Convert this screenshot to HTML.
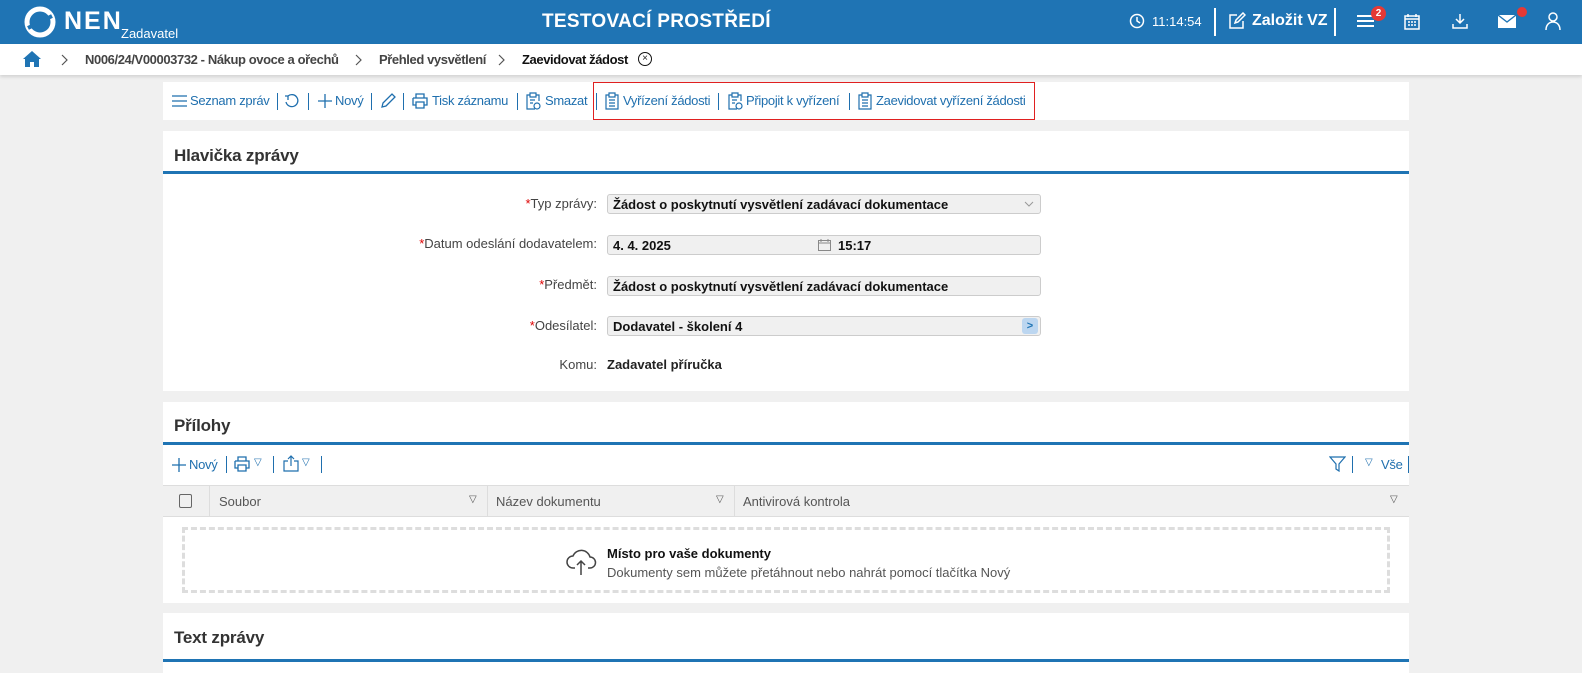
<!DOCTYPE html>
<html><head><meta charset="utf-8"><style>
*{box-sizing:border-box;margin:0;padding:0}
body{width:1582px;height:673px;overflow:hidden;background:#f0f0f0;font-family:"Liberation Sans",sans-serif;position:relative;color:#222}
.a{position:absolute;white-space:nowrap}
#hdr{left:0;top:0;width:1582px;height:44px;background:#1f74b4;color:#fff}
#bc{left:0;top:44px;width:1582px;height:31px;background:#fff;box-shadow:0 2px 3px rgba(0,0,0,.12)}
.panel{position:absolute;left:163px;width:1246px;background:#fff}
.t{position:absolute;font-size:13px;color:#1f6fae;letter-spacing:-.3px;white-space:nowrap}
.s{position:absolute;width:1px;height:17px;background:#1f6fae}
.title{font-size:17px;font-weight:bold;color:#333;letter-spacing:-.2px}
.line{position:absolute;left:0;width:1246px;height:3px;background:#1f74b4}
.lbl{font-size:13px;color:#444;text-align:right;width:300px;left:297px}
.lbl b{color:#d00;font-weight:normal}
.inp{left:607px;width:434px;height:20px;background:#f0f0f0;border:1px solid #ccc;border-radius:3px;font-size:13px;font-weight:bold;padding:2px 5px;color:#111}
svg.i{position:absolute}
</style></head><body>
<div id="hdr" class="a">
 <svg class="a" style="left:24px;top:6px" width="32" height="32" viewBox="0 0 32 32"><circle cx="16" cy="16" r="13" fill="none" stroke="#fff" stroke-width="5"/><path d="M4 22 L28 10" stroke="#1f74b4" stroke-width="4"/></svg>
 <div class="a" style="left:64px;top:7px;font-size:25px;font-weight:bold;letter-spacing:2px">NEN</div>
 <div class="a" style="left:121px;top:26px;font-size:13px">Zadavatel</div>
 <div class="a" style="left:542px;top:11px;font-size:19px;font-weight:bold;letter-spacing:.3px">TESTOVACÍ PROSTŘEDÍ</div>
 <svg class="a" style="left:1129px;top:13px" width="16" height="16" viewBox="0 0 16 16"><circle cx="8" cy="8" r="6.5" fill="none" stroke="#fff" stroke-width="1.5"/><path d="M8 4v4l3 2" fill="none" stroke="#fff" stroke-width="1.5"/></svg>
 <div class="a" style="left:1152px;top:14px;font-size:13px">11:14:54</div>
 <div class="a" style="left:1214px;top:8px;width:2px;height:28px;background:#fff"></div>
 <svg class="a" style="left:1228px;top:12px" width="18" height="18" viewBox="0 0 18 18"><path d="M9 3H2v13h13V9M7 11l1-3 7-7 2 2-7 7z" fill="none" stroke="#fff" stroke-width="1.5"/></svg>
 <div class="a" style="left:1252px;top:12px;font-size:16px;font-weight:bold">Založit VZ</div>
 <div class="a" style="left:1334px;top:8px;width:2px;height:28px;background:#fff"></div>
 <div class="a" style="left:1357px;top:15px;width:17px;height:2px;background:#fff;box-shadow:0 5px #fff,0 10px #fff"></div>
 <div class="a" style="left:1371px;top:6px;width:15px;height:15px;border-radius:50%;background:#e53935;font-size:10px;text-align:center;line-height:15px;font-weight:bold">2</div>
 <svg class="a" style="left:1404px;top:13px" width="16" height="17" viewBox="0 0 16 17"><rect x="1" y="3" width="14" height="13" fill="none" stroke="#fff" stroke-width="1.5"/><path d="M1 6h14M4 1v3M12 1v3M4 9h2M7 9h2M10 9h2M4 12h2M7 12h2M10 12h2" stroke="#fff" stroke-width="1.5"/></svg>
 <svg class="a" style="left:1451px;top:13px" width="18" height="17" viewBox="0 0 18 17"><path d="M9 1v9M5 6l4 4 4-4M2 11v4h14v-4" fill="none" stroke="#fff" stroke-width="1.5"/></svg>
 <svg class="a" style="left:1498px;top:15px" width="18" height="13" viewBox="0 0 18 13"><rect width="18" height="13" fill="#fff"/><path d="M0 0l9 7 9-7" fill="none" stroke="#1f74b4" stroke-width="1.3"/></svg>
 <div class="a" style="left:1517px;top:7px;width:10px;height:10px;border-radius:50%;background:#e53935"></div>
 <svg class="a" style="left:1545px;top:12px" width="16" height="18" viewBox="0 0 16 18"><circle cx="8" cy="5" r="4" fill="none" stroke="#fff" stroke-width="1.5"/><path d="M1 18c0-5 3-8 7-8s7 3 7 8" fill="none" stroke="#fff" stroke-width="1.5"/></svg>
</div>
<div id="bc" class="a">
 <svg class="a" style="left:23px;top:7px" width="18" height="16" viewBox="0 0 18 16"><path d="M9 0L0 8h2v8h5v-5h4v5h5V8h2z" fill="#1f74b4"/></svg>
 <svg class="a" style="left:61px;top:10px" width="8" height="12" viewBox="0 0 8 12"><path d="M1 1l5 5-5 5" fill="none" stroke="#555" stroke-width="1.2"/></svg>
 <div class="a" style="left:85px;top:8px;font-size:13px;color:#444;font-weight:bold;letter-spacing:-.4px">N006/24/V00003732 - Nákup ovoce a ořechů</div>
 <svg class="a" style="left:355px;top:10px" width="8" height="12" viewBox="0 0 8 12"><path d="M1 1l5 5-5 5" fill="none" stroke="#555" stroke-width="1.2"/></svg>
 <div class="a" style="left:379px;top:8px;font-size:13px;color:#444;font-weight:bold;letter-spacing:-.4px">Přehled vysvětlení</div>
 <svg class="a" style="left:498px;top:10px" width="8" height="12" viewBox="0 0 8 12"><path d="M1 1l5 5-5 5" fill="none" stroke="#555" stroke-width="1.2"/></svg>
 <div class="a" style="left:522px;top:8px;font-size:13px;color:#111;font-weight:bold;letter-spacing:-.4px">Zaevidovat žádost</div>
 <div class="a" style="left:638px;top:8px;width:14px;height:14px;border:1.3px solid #111;border-radius:50%;font-size:10px;text-align:center;line-height:11px">×</div>
</div>
<div class="panel" style="top:82px;height:38px">
 <svg class="i" style="left:9px;top:13px" width="15" height="12" viewBox="0 0 15 12"><path d="M0 1h15M0 6h15M0 11h15" stroke="#1f6fae" stroke-width="1.3"/></svg>
 <div class="t" style="left:27px;top:11px">Seznam zpráv</div><div class="s" style="left:114px;top:11px"></div>
 <svg class="i" style="left:121px;top:11px" width="16" height="16" viewBox="0 0 16 16"><path d="M4 3a6 6 0 1 1-2 6M4 3v4M4 3H1" fill="none" stroke="#1f6fae" stroke-width="1.3"/></svg>
 <div class="s" style="left:145px;top:11px"></div>
 <svg class="i" style="left:155px;top:12px" width="14" height="14" viewBox="0 0 14 14"><path d="M7 0v14M0 7h14" stroke="#1f6fae" stroke-width="1.3"/></svg>
 <div class="t" style="left:172px;top:11px">Nový</div><div class="s" style="left:208px;top:11px"></div>
 <svg class="i" style="left:217px;top:11px" width="16" height="16" viewBox="0 0 16 16"><path d="M2 14l1-4 9-9 3 3-9 9z" fill="none" stroke="#1f6fae" stroke-width="1.3"/></svg>
 <div class="s" style="left:240px;top:11px"></div>
 <svg class="i" style="left:249px;top:11px" width="16" height="16" viewBox="0 0 16 16"><path d="M4 5V1h8v4M1 5h14v7h-3M4 12H1V5M4 9h8v6H4z" fill="none" stroke="#1f6fae" stroke-width="1.3"/></svg>
 <div class="t" style="left:269px;top:11px">Tisk záznamu</div><div class="s" style="left:354px;top:11px"></div>
 <svg class="i" style="left:362px;top:10px" width="16" height="18" viewBox="0 0 16 18"><path d="M5 3H2v14h8M11 3h3v6M5 1h6v4H5zM5 8h5M5 11h3" fill="none" stroke="#1f6fae" stroke-width="1.2"/><circle cx="12" cy="14" r="3" fill="none" stroke="#1f6fae" stroke-width="1.2"/></svg>
 <div class="t" style="left:382px;top:11px">Smazat</div><div class="s" style="left:433px;top:11px"></div>
 <svg class="i" style="left:442px;top:10px" width="14" height="18" viewBox="0 0 14 18"><path d="M4 3H1v14h12V3h-3M4 1h6v4H4zM4 8h6M4 11h6M4 14h6" fill="none" stroke="#1f6fae" stroke-width="1.2"/></svg>
 <div class="t" style="left:460px;top:11px">Vyřízení žádosti</div><div class="s" style="left:555px;top:11px"></div>
 <svg class="i" style="left:564px;top:10px" width="16" height="18" viewBox="0 0 16 18"><path d="M5 3H2v14h8M11 3h3v6M5 1h6v4H5zM5 8h5M5 11h3" fill="none" stroke="#1f6fae" stroke-width="1.2"/><circle cx="12" cy="14" r="3" fill="none" stroke="#1f6fae" stroke-width="1.2"/></svg>
 <div class="t" style="left:583px;top:11px">Připojit k vyřízení</div><div class="s" style="left:686px;top:11px"></div>
 <svg class="i" style="left:695px;top:10px" width="14" height="18" viewBox="0 0 14 18"><path d="M4 3H1v14h12V3h-3M4 1h6v4H4zM4 8h6M4 11h6M4 14h6" fill="none" stroke="#1f6fae" stroke-width="1.2"/></svg>
 <div class="t" style="left:713px;top:11px">Zaevidovat vyřízení žádosti</div>
 <div class="a" style="left:430px;top:0;width:442px;height:38px;border:1px solid #e02020"></div>
</div>
<div class="panel" style="top:131px;height:260px">
 <div class="a title" style="left:11px;top:15px">Hlavička zprávy</div>
 <div class="line" style="top:40px"></div>
</div>
<div class="a lbl" style="top:196px"><b>*</b>Typ zprávy:</div>
<div class="a inp" style="top:194px">Žádost o poskytnutí vysvětlení zadávací dokumentace<svg style="position:absolute;right:6px;top:6px" width="10" height="6" viewBox="0 0 10 6"><path d="M1 1l4 4 4-4" fill="none" stroke="#999"/></svg></div>
<div class="a lbl" style="top:236px"><b>*</b>Datum odeslání dodavatelem:</div>
<div class="a inp" style="top:235px">4. 4. 2025<svg style="position:absolute;left:210px;top:3px" width="13" height="12" viewBox="0 0 13 12"><rect x=".5" y="1.5" width="12" height="10" fill="none" stroke="#888"/><path d="M.5 4h12M3 0v3M10 0v3" stroke="#888"/></svg><span style="position:absolute;left:230px;top:2px">15:17</span></div>
<div class="a lbl" style="top:277px"><b>*</b>Předmět:</div>
<div class="a inp" style="top:276px">Žádost o poskytnutí vysvětlení zadávací dokumentace</div>
<div class="a lbl" style="top:318px"><b>*</b>Odesílatel:</div>
<div class="a inp" style="top:316px">Dodavatel - školení 4<span style="position:absolute;right:2px;top:1px;width:16px;height:16px;background:#bcd6f0;border-radius:3px;color:#1f74b4;text-align:center;font-size:11px;line-height:16px">&gt;</span></div>
<div class="a lbl" style="top:357px">Komu:</div>
<div class="a" style="left:607px;top:357px;font-size:13px;font-weight:bold">Zadavatel příručka</div>

<div class="panel" style="top:402px;height:201px">
 <div class="a title" style="left:11px;top:14px">Přílohy</div>
 <div class="line" style="top:40px"></div>
 <svg class="i" style="left:9px;top:56px" width="14" height="14" viewBox="0 0 14 14"><path d="M7 0v14M0 7h14" stroke="#1f6fae" stroke-width="1.3"/></svg>
 <div class="t" style="left:26px;top:55px">Nový</div><div class="s" style="left:63px;top:54px"></div>
 <svg class="i" style="left:71px;top:54px" width="16" height="16" viewBox="0 0 16 16"><path d="M4 5V1h8v4M1 5h14v7h-3M4 12H1V5M4 9h8v6H4z" fill="none" stroke="#1f6fae" stroke-width="1.3"/></svg>
 <div class="t" style="left:91px;top:55px;font-size:10px">▽</div><div class="s" style="left:110px;top:54px"></div>
 <svg class="i" style="left:120px;top:53px" width="16" height="17" viewBox="0 0 16 17"><path d="M5 6H1v10h14V6h-4M8 11V1M5 4l3-3 3 3" fill="none" stroke="#1f6fae" stroke-width="1.2"/></svg>
 <div class="t" style="left:139px;top:55px;font-size:10px">▽</div><div class="s" style="left:158px;top:54px"></div>
 <svg class="i" style="left:1166px;top:54px" width="17" height="16" viewBox="0 0 17 16"><path d="M1 1h15l-6 7v7l-3-2V8z" fill="none" stroke="#1f6fae" stroke-width="1.2"/></svg>
 <div class="s" style="left:1189px;top:54px"></div>
 <div class="t" style="left:1202px;top:55px;font-size:10px">▽</div>
 <div class="t" style="left:1218px;top:55px">Vše</div><div class="s" style="left:1245px;top:54px"></div>
 <div class="a" style="left:0;top:83px;width:1246px;height:32px;background:#f0f0f0;border-top:1px solid #ddd;border-bottom:1px solid #ddd;font-size:13px;color:#555">
  <div class="a" style="left:46px;top:0;width:1px;height:31px;background:#ddd"></div>
  <div class="a" style="left:16px;top:8px;width:13px;height:14px;border:1px solid #666;border-radius:2px"></div>
  <div class="a" style="left:56px;top:8px">Soubor</div><div class="a" style="left:306px;top:8px;font-size:10px">▽</div>
  <div class="a" style="left:324px;top:0;width:1px;height:31px;background:#ddd"></div>
  <div class="a" style="left:333px;top:8px">Název dokumentu</div><div class="a" style="left:553px;top:8px;font-size:10px">▽</div>
  <div class="a" style="left:571px;top:0;width:1px;height:31px;background:#ddd"></div>
  <div class="a" style="left:580px;top:8px">Antivirová kontrola</div><div class="a" style="left:1227px;top:8px;font-size:10px">▽</div>
 </div>
 <div class="a" style="left:19px;top:125px;width:1208px;height:66px;border:3px dashed #ddd"></div>
 <svg class="a" style="left:402px;top:142px" width="32" height="32" viewBox="0 0 32 32"><path d="M10 24H8a6 6 0 0 1 0-12 9 9 0 0 1 17 1 5 5 0 0 1 0 11h-2M16 31V17M12 21l4-4 4 4" fill="none" stroke="#444" stroke-width="1.5"/></svg>
 <div class="a" style="left:444px;top:144px;font-size:13px;font-weight:bold;color:#111">Místo pro vaše dokumenty</div>
 <div class="a" style="left:444px;top:163px;font-size:13px;color:#555">Dokumenty sem můžete přetáhnout nebo nahrát pomocí tlačítka Nový</div>
</div>
<div class="panel" style="top:613px;height:60px">
 <div class="a title" style="left:11px;top:15px">Text zprávy</div>
 <div class="line" style="top:46px"></div>
</div>
</body></html>
